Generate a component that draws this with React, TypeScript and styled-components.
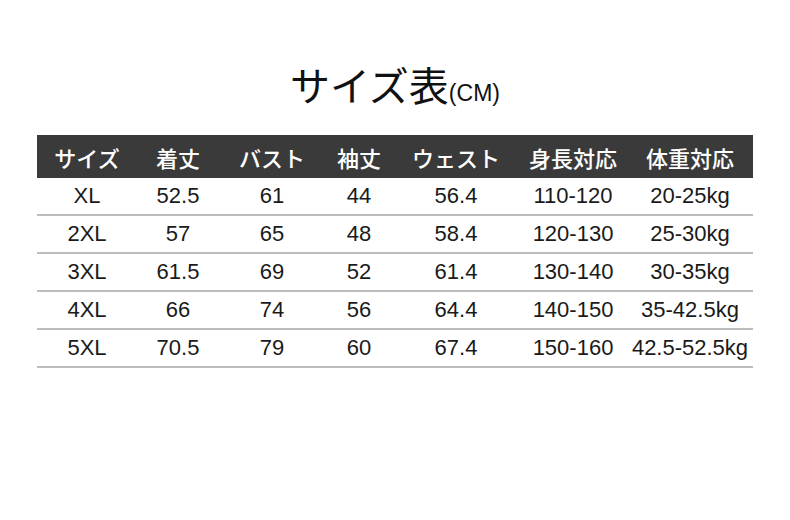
import styled, { createGlobalStyle } from 'styled-components'

const GlobalStyle = createGlobalStyle`
  body {
    margin: 0;
    background: #fff;
    font-family: 'Liberation Sans', Arial, sans-serif;
  }
`

const COLUMNS = '100px 82px 106px 68px 126px 108px 126px'

const headers = ['サイズ', '着丈', 'バスト', '袖丈', 'ウェスト', '身長対応', '体重対応']

const rows = [
  ['XL', '52.5', '61', '44', '56.4', '110-120', '20-25kg'],
  ['2XL', '57', '65', '48', '58.4', '120-130', '25-30kg'],
  ['3XL', '61.5', '69', '52', '61.4', '130-140', '30-35kg'],
  ['4XL', '66', '74', '56', '64.4', '140-150', '35-42.5kg'],
  ['5XL', '70.5', '79', '60', '67.4', '150-160', '42.5-52.5kg'],
]

export default function App() {
  return (
    <Page>
      <GlobalStyle />
      <Title>
        <TitleMain>サイズ表</TitleMain>
        <TitleUnit>(CM)</TitleUnit>
      </Title>
      <Table>
        <HeaderRow>
          {headers.map((h) => (
            <HeaderCell key={h}>{h}</HeaderCell>
          ))}
        </HeaderRow>
        {rows.map((r) => (
          <Row key={r[0]}>
            {r.map((v, i) => (
              <Cell key={i}>{v}</Cell>
            ))}
          </Row>
        ))}
      </Table>
    </Page>
  )
}

const Page = styled.div`
  width: 790px;
  height: 520px;
  box-sizing: border-box;
  padding: 64px 37px 0;
`

const Title = styled.div`
  display: flex;
  justify-content: center;
  align-items: baseline;
  height: 40px;
  color: #111;
`

const TitleMain = styled.span`
  font-family: 'Noto Sans CJK JP', sans-serif;
  font-size: 40px;
  line-height: 40px;
`

const TitleUnit = styled.span`
  font-family: 'Liberation Sans', Arial, sans-serif;
  font-size: 23px;
`

const Table = styled.div`
  margin-top: 31px;
  width: 716px;
`

const HeaderRow = styled.div`
  display: grid;
  grid-template-columns: ${COLUMNS};
  height: 43px;
  align-items: center;
  background: #3a3a3a;
`

const HeaderCell = styled.div`
  text-align: center;
  color: #fff;
  font-family: 'Noto Sans CJK JP', sans-serif;
  font-weight: 500;
  font-size: 22px;
  line-height: 1;
`

const Row = styled.div`
  display: grid;
  grid-template-columns: ${COLUMNS};
  height: 36px;
  align-items: center;
  border-bottom: 2px solid #bdbdbd;
`

const Cell = styled.div`
  text-align: center;
  color: #1a1a1a;
  font-size: 22px;
  line-height: 1;
`
